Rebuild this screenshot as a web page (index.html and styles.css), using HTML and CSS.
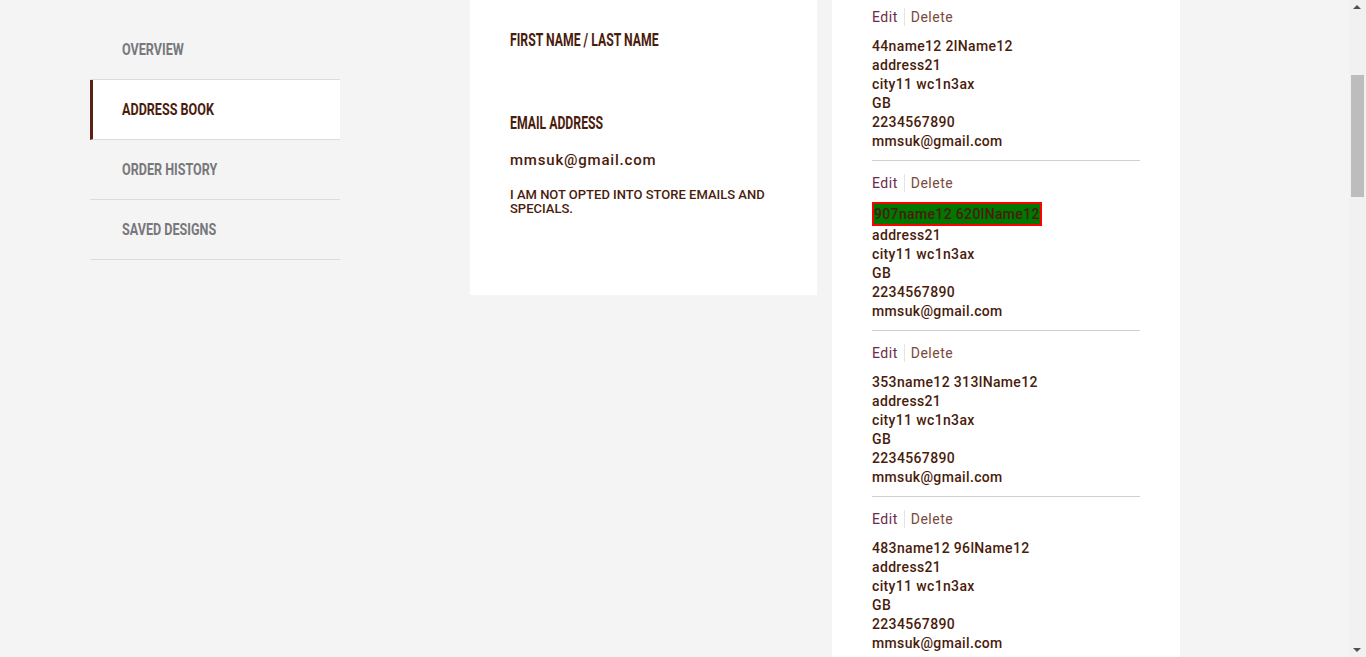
FILE: index.html
```html
<!DOCTYPE html>
<html lang="en">
<head>
<meta charset="utf-8">
<title>Address Book</title>
<link rel="stylesheet" href="styles.css">
</head>
<body>
<div class="page">
  <nav class="side-nav">
    <a class="nav-item" href="#"><span class="cond">OVERVIEW</span></a>
    <a class="nav-item active" href="#"><span class="cond">ADDRESS BOOK</span></a>
    <a class="nav-item" href="#"><span class="cond">ORDER HISTORY</span></a>
    <a class="nav-item" href="#"><span class="cond">SAVED DESIGNS</span></a>
  </nav>

  <section class="card profile">
    <h2 class="label"><span class="cond-label">FIRST NAME / LAST NAME</span></h2>
    <h2 class="label email-label"><span class="cond-label">EMAIL ADDRESS</span></h2>
    <p class="email">mmsuk@gmail.com</p>
    <p class="optin">I AM NOT OPTED INTO STORE EMAILS AND SPECIALS.</p>
  </section>

  <section class="card addresses">
    <div class="address">
      <div class="actions"><a href="#" class="edit">Edit</a><span class="sep"></span><a href="#" class="delete">Delete</a></div>
      <div class="lines">
        <div class="name">44name12 2lName12</div>
        <div>address21</div>
        <div>city11 wc1n3ax</div>
        <div>GB</div>
        <div>2234567890</div>
        <div>mmsuk@gmail.com</div>
      </div>
    </div>
    <div class="address">
      <div class="actions"><a href="#" class="edit">Edit</a><span class="sep"></span><a href="#" class="delete">Delete</a></div>
      <div class="lines">
        <div class="name"><span class="highlight">907name12 620lName12</span></div>
        <div>address21</div>
        <div>city11 wc1n3ax</div>
        <div>GB</div>
        <div>2234567890</div>
        <div>mmsuk@gmail.com</div>
      </div>
    </div>
    <div class="address">
      <div class="actions"><a href="#" class="edit">Edit</a><span class="sep"></span><a href="#" class="delete">Delete</a></div>
      <div class="lines">
        <div class="name">353name12 313lName12</div>
        <div>address21</div>
        <div>city11 wc1n3ax</div>
        <div>GB</div>
        <div>2234567890</div>
        <div>mmsuk@gmail.com</div>
      </div>
    </div>
    <div class="address">
      <div class="actions"><a href="#" class="edit">Edit</a><span class="sep"></span><a href="#" class="delete">Delete</a></div>
      <div class="lines">
        <div class="name">483name12 96lName12</div>
        <div>address21</div>
        <div>city11 wc1n3ax</div>
        <div>GB</div>
        <div>2234567890</div>
        <div>mmsuk@gmail.com</div>
      </div>
    </div>
  </section>
</div>
<div class="fake-scrollbar" aria-hidden="true">
  <span class="arrow up"></span>
  <span class="thumb"></span>
  <span class="arrow down"></span>
</div>
</body>
</html>
```

FILE: styles.css
```css
html, body {
  margin: 0;
  padding: 0;
  background: #f4f4f4;
}
body {
  font-family: "Roboto", "DejaVu Sans", sans-serif;
  color: #4a1c0c;
}
.page {
  display: flex;
  align-items: flex-start;
  padding-left: 90px;
}
.cond,
.cond-label {
  display: inline-block;
  white-space: nowrap;
  transform: scaleX(0.74);
  transform-origin: left center;
}
.cond-label {
  transform: scaleX(0.68);
}
.side-nav {
  width: 250px;
  margin-top: 20px;
  display: flex;
  flex-direction: column;
}
.nav-item {
  display: flex;
  align-items: center;
  height: 60px;
  box-sizing: border-box;
  padding-left: 32px;
  padding-bottom: 2px;
  border-bottom: 1px solid #dcdcdc;
  font-family: "Roboto", sans-serif;
  font-weight: bold;
  font-size: 17px;
  color: #77787b;
  text-decoration: none;
}
.nav-item.active {
  background: #fff;
  color: #4a1c0c;
  border-left: 3px solid #5c2312;
  padding-left: 29px;
}
.card {
  background: #fff;
  box-sizing: border-box;
}
.profile {
  width: 347px;
  height: 295px;
  margin-left: 130px;
  padding: 30px 40px 0;
}
.label {
  margin: 0;
  font-family: "Roboto", sans-serif;
  font-weight: bold;
  font-size: 18px;
  line-height: 20px;
  color: #4a1c0c;
}
.email-label {
  margin-top: 63px;
}
.email {
  margin: 17px 0 0;
  font-size: 15px;
  font-weight: 500;
  letter-spacing: 0.8px;
  line-height: 20px;
}
.optin {
  margin: 18px 0 0;
  font-size: 13px;
  line-height: 14px;
  font-weight: 500;
}
.addresses {
  width: 348px;
  margin-left: 15px;
  padding: 6px 40px 40px;
}
.address {
  width: 268px;
  padding-bottom: 9px;
  border-bottom: 1px solid #cfcfcf;
  margin-bottom: 11px;
}
.actions {
  display: flex;
  align-items: center;
  height: 22px;
  font-size: 14px;
  letter-spacing: 0.5px;
}
.actions a {
  text-decoration: none;
  color: #6b2a48;
}
.actions .delete {
  color: #7a4a3a;
}
.sep {
  width: 1px;
  height: 18px;
  background: #e4e4e4;
  margin: 0 6px;
}
.lines {
  margin-top: 9px;
  font-size: 14px;
  letter-spacing: 0.35px;
  line-height: 19px;
  font-weight: 500;
  color: #4a1c0c;
}
.highlight {
  display: inline-block;
  background: #007700;
  border: 2px solid #ff0000;
  line-height: 20px;
  margin-top: -1px;
}
.fake-scrollbar {
  position: fixed;
  top: 0;
  right: 0;
  width: 17px;
  height: 100%;
  background: #f1f1f1;
}
.fake-scrollbar .thumb {
  position: absolute;
  left: 2px;
  width: 13px;
  top: 75px;
  height: 122px;
  background: #bdbdbd;
}
.fake-scrollbar .arrow {
  position: absolute;
  left: 4px;
  width: 0;
  height: 0;
  border-left: 4px solid transparent;
  border-right: 4px solid transparent;
}
.fake-scrollbar .up {
  top: 5px;
  border-bottom: 4px solid #505050;
}
.fake-scrollbar .down {
  bottom: 5px;
  border-top: 4px solid #505050;
}
```
